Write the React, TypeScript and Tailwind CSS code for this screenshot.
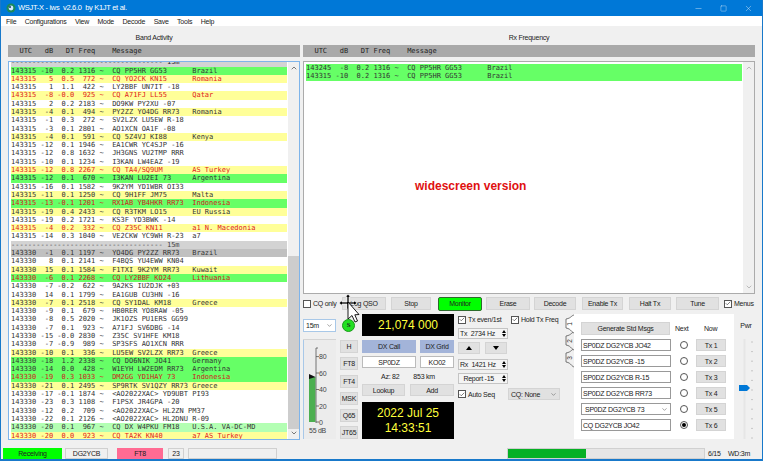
import { ChevronDown, Minus, Square, X, Check } from "lucide-react";

const mono = "font-['DejaVu_Sans_Mono',monospace]";

type Kind = "" | "g" | "y" | "yr" | "gr" | "gray" | "sep" | "lg";

const rowColor: Record<Kind, string> = {
  "": "text-[#333]",
  g: "bg-[#66ff66] text-[#333]",
  y: "bg-[#ffff99] text-[#333]",
  yr: "bg-[#ffff99] text-[#e02020]",
  gr: "bg-[#66ff66] text-[#d02020]",
  gray: "bg-[#c0c0c0] text-[#333]",
  sep: "bg-[#d3d3d3] text-[#444]",
  lg: "bg-[#b3ffb3] text-[#333]",
};

const fmt = (t: string, db: string, dt: string, f: string, msg: string, c = "") =>
  t + db.padStart(4) + dt.padStart(5) + f.padStart(5) + " ~  " + msg.padEnd(19) + c;

const sep = "------------------------------------ 15m";
const a = "143315";
const b = "143330";
const rows: [string, Kind][] = [
  [fmt(a, "-10", "0.2", "1316", "CQ PP5HR GG53", "Brazil"), "g"],
  [fmt(a, "5", "0.5", "772", "CQ YO2CK KN15", "Romania"), "yr"],
  [fmt(a, "1", "1.1", "422", "LY2BBF UN7IT -18"), ""],
  [fmt(a, "-8", "-0.0", "925", "CQ A71FJ LL55", "Qatar"), "yr"],
  [fmt(a, "2", "0.2", "2183", "DO9KW PY2XU -07"), ""],
  [fmt(a, "-4", "0.1", "494", "PY2ZZ YO4DG RR73", "Romania"), "y"],
  [fmt(a, "-1", "0.3", "272", "SV2LZX LU5EW R-18"), ""],
  [fmt(a, "-3", "0.1", "2801", "AO1XCN OA1F -08"), ""],
  [fmt(a, "-4", "0.1", "591", "CQ 5Z4VJ KI88", "Kenya"), "y"],
  [fmt(a, "-12", "0.1", "1946", "EA1CWR YC4SJP -16"), ""],
  [fmt(a, "-12", "0.8", "1632", "JH3GNS VU2TMP RRR"), ""],
  [fmt(a, "-10", "0.1", "1234", "I3KAN LW4EAZ -19"), ""],
  [fmt(a, "-12", "0.8", "2267", "CQ TA4/SQ9UM", "AS Turkey"), "yr"],
  [fmt(a, "-12", "0.1", "670", "I3KAN LU2EI 73", "Argentina"), "g"],
  [fmt(a, "-16", "0.1", "1582", "9K2YM YD1WBR OI33"), ""],
  [fmt(a, "-11", "0.1", "1250", "CQ 9H1FF JM75", "Malta"), "y"],
  [fmt(a, "-13", "-0.1", "1201", "RX1AB YB4HKR RR73", "Indonesia"), "gr"],
  [fmt(a, "-19", "0.4", "2433", "CQ R3TKM LO15", "EU Russia"), "y"],
  [fmt(a, "-19", "0.2", "1721", "KS3F YD3BWK -14"), ""],
  [fmt(a, "-4", "0.2", "332", "CQ Z35C KN11", "a1 N. Macedonia"), "yr"],
  [fmt(a, "-14", "0.3", "1040", "VE2CKW YC9WH R-23", "a7"), ""],
  [sep, "sep"],
  [fmt(b, "-1", "0.1", "1197", "YO4DG PY2ZZ RR73", "Brazil"), "gray"],
  [fmt(b, "8", "0.1", "2141", "F4BQS YU4EWW KN04"), ""],
  [fmt(b, "15", "0.1", "1584", "F1TXI 9K2YM RR73", "Kuwait"), "y"],
  [fmt(b, "-6", "0.1", "2268", "CQ LY2BBF KO24", "Lithuania"), "gr"],
  [fmt(b, "-7", "-0.2", "622", "9A2KS IU2DJK +03"), ""],
  [fmt(b, "14", "0.1", "1799", "EA1GUB CU3HN -16"), ""],
  [fmt(b, "-7", "0.1", "2518", "CQ SY1DAL KM18", "Greece"), "y"],
  [fmt(b, "-9", "0.1", "679", "HB0RER YO8RAW -05"), ""],
  [fmt(b, "-8", "0.5", "2020", "JK1OZS PU1ERS GG99"), ""],
  [fmt(b, "-7", "0.1", "923", "A71FJ SV6DBG -14"), ""],
  [fmt(b, "-15", "-0.0", "2830", "Z35C SV1HFE KM18"), ""],
  [fmt(b, "-7", "-0.9", "989", "SP3SFS AO1XCN RRR"), ""],
  [fmt(b, "-10", "0.1", "336", "LU5EW SV2LZX RR73", "Greece"), "y"],
  [fmt(b, "-18", "1.2", "2338", "CQ DO6NIK JO41", "Germany"), "g"],
  [fmt(b, "-14", "0.0", "428", "W1EYH LW2EDM RR73", "Argentina"), "g"],
  [fmt(b, "-19", "0.3", "1033", "DM2GG YD1HAY 73", "Indonesia"), "gr"],
  [fmt(b, "-21", "0.1", "2495", "SP9RTK SV1QZY RR73", "Greece"), "y"],
  [fmt(b, "-17", "-0.1", "1874", "<AO2022XAC> YD9UBT PI93"), ""],
  [fmt(b, "-23", "0.3", "1108", "F1PSX JR4GPA -20"), ""],
  [fmt(b, "-12", "0.2", "709", "<AO2022XAC> HL2ZN PM37"), ""],
  [fmt(b, "-22", "0.1", "2126", "<AO2022XAC> HL2DNU R-09"), ""],
  [fmt(b, "-20", "0.1", "967", "CQ DX W4PKU FM18", "U.S.A. VA-DC-MD"), "lg"],
  [fmt(b, "-20", "0.0", "923", "CQ TA2K KN40", "a7 AS Turkey"), "yr"],
];

function Row({ text, kind }: { text: string; kind: Kind }) {
  return <div className={`h-[8.3px] leading-[8.3px] whitespace-pre ${rowColor[kind]}`}>{text}</div>;
}

function Scrollbar({ thumb }: { thumb?: boolean }) {
  return (
    <div className="w-[11px] flex flex-col items-center bg-[#f0f0f0] text-[#606060]">
      <ChevronDown size={8} strokeWidth={2.5} className={`rotate-180 mt-[2px] shrink-0 ${thumb ? "" : "text-[#b0b0b0]"}`} />
      <div className="flex-1 w-full flex flex-col justify-end">
        {thumb && <div className="h-[173px] bg-[#cdcdcd]" />}
      </div>
      <ChevronDown size={8} strokeWidth={2.5} className={`mb-[2px] shrink-0 ${thumb ? "" : "text-[#b0b0b0]"}`} />
    </div>
  );
}

function HeaderBar() {
  return (
    <div className={`h-[12px] bg-[#a9a9a9] pl-[3px] text-[7px] tracking-normal leading-[12px] whitespace-pre text-[#222] ${mono}`}>
      {"  UTC   dB   DT Freq    Message"}
    </div>
  );
}

function Btn({ children, className = "" }: { children: React.ReactNode; className?: string }) {
  return (
    <div className={`bg-[#e1e1e1] border border-[#d4d4d4] flex items-center justify-center text-[#222] ${className}`}>
      {children}
    </div>
  );
}

function Box({ on }: { on?: boolean }) {
  return (
    <span className="w-[8px] h-[8px] border border-[#555] bg-white flex items-center justify-center shrink-0">
      {on && <Check size={7} strokeWidth={2.5} className="text-[#333]" />}
    </span>
  );
}

function Spin({ children, className = "" }: { children: React.ReactNode; className?: string }) {
  return (
    <div className={`w-[50px] h-[11px] bg-[#f4f4f4] border border-[#c4c4c4] flex items-center pl-[1px] ${className}`}>
      <span className="flex-1 whitespace-pre">{children}</span>
      <span className="w-[7px] h-[9px] flex flex-col items-center justify-center gap-[1px] text-[#222]">
        <span className="w-0 h-0 border-x-[2px] border-x-transparent border-b-[3px] border-b-black" />
        <span className="w-0 h-0 border-x-[2px] border-x-transparent border-t-[3px] border-t-black" />
      </span>
    </div>
  );
}

function Meter() {
  const marks = [
    [355.6, "80"],
    [372, "60"],
    [388.5, "40"],
    [405, "20"],
    [421, "0"],
  ] as const;
  return (
    <svg width="33" height="100" viewBox="303 338 33 100" className="bg-[#ececec] block">
      <line x1="303.5" y1="338" x2="303.5" y2="438" stroke="#a8c8e8" strokeWidth="1" />
      <line x1="303" y1="338.5" x2="336" y2="338.5" stroke="#d4d4d4" strokeWidth="1" />
      <rect x="309" y="376" width="6.5" height="45" fill="#4caf50" />
      <line x1="316" y1="347" x2="316" y2="422" stroke="#555" strokeWidth="0.8" />
      <line x1="316" y1="347" x2="318" y2="347" stroke="#555" strokeWidth="0.8" />
      <polygon points="309,373 315.5,376 309,378" fill="#111" />
      {marks.map(([y, t]) => (
        <g key={t}>
          <line x1="316" y1={y} x2="319" y2={y} stroke="#555" strokeWidth="0.8" />
          <text x="319" y={y + 2.6} fontSize="7" fill="#444" fontFamily="Liberation Sans">
            {t}
          </text>
        </g>
      ))}
      <text x="309" y="432" fontSize="7" fill="#444" fontFamily="Liberation Sans">
        55 dB
      </text>
    </svg>
  );
}

function Tabs() {
  return (
    <svg width="11" height="54" viewBox="0 0 11 54" className="block shrink-0">
      {[2, 1, 0].map((i) => {
        const y = i * 17;
        return (
          <g key={i}>
            <path
              d={`M11 ${y + 19} C7 ${y + 19} 8 ${y + 15} 2 ${y + 14} L2 ${y + 5} C8 ${y + 4} 7 ${y + 1} 11 ${y + 1}`}
              fill={i === 0 ? "#fff" : "#f0f0f0"}
              stroke="#555"
              strokeWidth="0.8"
            />
            <text
              x="6.5"
              y={y + 10}
              fontSize="6.5"
              fill="#333"
              fontFamily="Liberation Sans"
              textAnchor="middle"
              dominantBaseline="middle"
              transform={`rotate(-90 6.5 ${y + 10})`}
            >
              {i + 1}
            </text>
          </g>
        );
      })}
    </svg>
  );
}

function Slider() {
  const ticks = [0, 1, 2, 3, 4, 5, 6, 7, 8, 9, 10];
  return (
    <svg width="18" height="102" viewBox="737 338 18 102" className="block">
      <rect x="743.5" y="338" width="2" height="100" fill="#e6e6e6" />
      {ticks.map((i) => (
        <line key={i} x1="751" y1={341 + i * 9.6} x2="753" y2={341 + i * 9.6} stroke="#bbb" strokeWidth="0.8" />
      ))}
      <polygon points="739,384 747,384 750,387 747,390 739,390" fill="#0078d7" />
    </svg>
  );
}

function Cursor() {
  return (
    <svg width="24" height="34" viewBox="0 0 24 34" className="absolute left-[337px] top-[293px]">
      <path d="M10 1 L12.5 4 L11 4 L11 9 L16 9 L16 7.5 L19 10 L16 12.5 L16 11 L11 11 L11 16 L9 16 L9 11 L4 11 L4 12.5 L1 10 L4 7.5 L4 9 L9 9 L9 4 L7.5 4 Z" fill="#000" stroke="#fff" strokeWidth="0.7" />
      <path d="M10 9 L10 26 L14 22.5 L17 29 L19.5 28 L16.8 21.8 L21 21.5 Z" fill="#fff" stroke="#000" strokeWidth="0.9" />
    </svg>
  );
}

const txRows = [
  "SP0DZ DG2YCB JO42",
  "SP0DZ DG2YCB -15",
  "SP0DZ DG2YCB R-15",
  "SP0DZ DG2YCB RR73",
  "SP0DZ DG2YCB 73",
  "CQ DG2YCB JO42",
];

export default function App() {
  return (
    <div className="relative w-[763px] h-[461px] overflow-hidden flex flex-col bg-[#f0f0f0] border-x border-b-2 border-[#1979ca] font-['Liberation_Sans',sans-serif] text-[7px] tracking-[-0.25px] leading-none text-[#222]">
      {/* title bar */}
      <div className="h-[16px] shrink-0 bg-[#0078d7] text-white flex items-center pl-[5px] text-[7.5px] tracking-[-0.3px]">
        <svg width="10" height="10" viewBox="0 0 10 10" className="shrink-0 mr-[2px]">
          <circle cx="5" cy="5" r="4.5" fill="#1b8a5a" />
          <circle cx="5" cy="5" r="2.4" fill="#cfe8ff" />
          <circle cx="4" cy="4" r="1.1" fill="#23406e" />
        </svg>
        <span className="whitespace-pre">WSJT-X - iws  v2.6.0  by K1JT et al.</span>
        <div className="ml-auto flex items-center gap-[17px] pr-[9px]">
          <Minus size={9} strokeWidth={1} />
          <Square size={7} strokeWidth={1.2} />
          <X size={9} strokeWidth={1} />
        </div>
      </div>
      {/* menu */}
      <div className="h-[10px] shrink-0 bg-white flex items-center gap-[8.5px] pl-[5px]">
        {["File", "Configurations", "View", "Mode", "Decode", "Save", "Tools", "Help"].map((m) => (
          <span key={m}>{m}</span>
        ))}
      </div>
      {/* panes */}
      <div className="flex-1 flex pl-[7px] min-h-0">
        <div className="w-[292px] shrink-0 flex flex-col">
          <div className="h-[19px] flex items-center justify-center pt-[3px]">Band Activity</div>
          <HeaderBar />
          <div className={`mt-[4px] h-[379px] border border-[#7eb4ea] bg-white flex overflow-hidden pl-[1px] text-[7px] tracking-normal ${mono}`}>
            <div className="w-[276px] ml-[1px] shrink-0 overflow-hidden">
              <div className="h-[4.5px] overflow-hidden">
                <div className="-mt-[3.8px] h-[8.3px] leading-[8.3px] bg-[#d3d3d3] whitespace-pre">{sep}</div>
              </div>
              {rows.map(([t, k], i) => (
                <Row key={i} text={t} kind={k} />
              ))}
            </div>
            <div className="flex-1" />
            <Scrollbar thumb />
          </div>
        </div>
        <div className="w-[452px] ml-[3px] shrink-0 flex flex-col">
          <div className="h-[19px] flex items-center justify-center pt-[3px]">Rx Frequency</div>
          <HeaderBar />
          <div className={`mt-[4px] h-[233px] border border-[#ababab] bg-white flex text-[7px] tracking-normal relative ${mono}`}>
            <div className="flex-1 pl-[2px] pt-[2px]">
              <div className="w-[436px]">
                <Row text={fmt("143245", "-8", "0.2", "1316", "CQ PP5HR GG53", "Brazil")} kind="g" />
                <Row text={fmt("143315", "-10", "0.2", "1316", "CQ PP5HR GG53", "Brazil")} kind="g" />
              </div>
            </div>
            <Scrollbar />
            <span className="absolute left-[111px] top-[118px] text-[12px] font-bold text-[#e01010] font-['Liberation_Sans',sans-serif]">
              widescreen version
            </span>
          </div>
          {/* button row */}
          <div className="mt-[3px] h-[13px] flex items-center">
            <div className="w-[39px] flex items-center gap-[2px]">
              <Box />
              <span>CQ only</span>
            </div>
            <Btn className="w-[44px] h-full">Log QSO</Btn>
            <Btn className="w-[40px] h-full ml-[5px]">Stop</Btn>
            <div className="w-[44px] h-[14px] ml-[7px] bg-[#00ff00] border border-[#2b6b2b] rounded-[2px] flex items-center justify-center">Monitor</div>
            <Btn className="w-[44px] h-full ml-[4px]">Erase</Btn>
            <Btn className="w-[42px] h-full ml-[4px]">Decode</Btn>
            <Btn className="w-[41px] h-full ml-[6px]">Enable Tx</Btn>
            <Btn className="w-[42px] h-full ml-[6px]">Halt Tx</Btn>
            <Btn className="w-[43px] h-full ml-[5px]">Tune</Btn>
            <div className="ml-[5px] flex items-center gap-[2px]">
              <Box on />
              <span>Menus</span>
            </div>
          </div>
          {/* controls */}
          <div className="mt-[4px] flex h-[127px]">
            <div className="w-[55px] shrink-0 flex flex-col">
              <div className="flex items-center mt-[4px] h-[14px]">
                <div className="w-[33px] h-[13px] border border-[#a8c8e8] bg-white flex items-center justify-between px-[2px]">
                  <span>15m</span>
                  <ChevronDown size={7} className="text-[#666]" />
                </div>
                <div className="w-[13px] h-[13px] ml-[6px] rounded-full bg-[#22e022] border border-[#1a9a1a] flex items-center justify-center font-bold text-[7px] font-['Liberation_Serif',serif]">S</div>
              </div>
              <div className="flex mt-[7px]">
                <Meter />
                <div className="ml-[4px] w-[18px] flex flex-col gap-[4.3px] pt-[1px]">
                  {["H", "FT8", "FT4", "MSK", "Q65", "JT65"].map((m) => (
                    <Btn key={m} className="h-[13px] w-full">{m}</Btn>
                  ))}
                </div>
              </div>
            </div>
            <div className="w-[92px] ml-[4px] shrink-0 flex flex-col">
              <div className="h-[22px] bg-black text-[#ffff3c] text-[12px] tracking-normal flex items-center justify-center">21,074 000</div>
              <div className="flex gap-[4px] mt-[4px]">
                <div className="w-[54px] h-[13px] bg-[#a3b4d9] flex items-center justify-center">DX Call</div>
                <div className="flex-1 h-[13px] bg-[#a3b4d9] flex items-center justify-center">DX Grid</div>
              </div>
              <div className="flex gap-[4px] mt-[3px]">
                <div className="w-[54px] h-[12px] bg-white border border-[#bbb] flex items-center justify-center">SP0DZ</div>
                <div className="flex-1 h-[12px] bg-white border border-[#bbb] flex items-center justify-center">KO02</div>
              </div>
              <div className="h-[16px] flex items-center pl-[19px] gap-[14px]">
                <span>Az: 82</span>
                <span>853 km</span>
              </div>
              <div className="flex gap-[5px]">
                <Btn className="w-[43px] h-[12px]">Lookup</Btn>
                <Btn className="flex-1 h-[12px]">Add</Btn>
              </div>
              <div className="mt-[6px] h-[37px] bg-black text-[#ffff3c] text-[12px] tracking-normal leading-[15px] flex flex-col items-center justify-center">
                <span>2022 Jul 25</span>
                <span>14:33:51</span>
              </div>
            </div>
            <div className="w-[102px] ml-[4px] shrink-0 flex flex-col">
              <div className="h-[11px] flex items-center">
                <div className="w-[53px] flex items-center gap-[2px]">
                  <Box on />
                  <span>Tx even/1st</span>
                </div>
                <div className="flex items-center gap-[2px] whitespace-nowrap">
                  <Box on />
                  <span>Hold Tx Freq</span>
                </div>
              </div>
              <Spin className="mt-[3px]">Tx  2734 Hz</Spin>
              <div className="flex gap-[5px] mt-[3px]">
                <Btn className="w-[22px] h-[12px]"><span className="w-0 h-0 border-x-[3px] border-x-transparent border-b-[4px] border-b-black" /></Btn>
                <Btn className="w-[22px] h-[12px]"><span className="w-0 h-0 border-x-[3px] border-x-transparent border-t-[4px] border-t-black" /></Btn>
              </div>
              <Spin className="mt-[5px]">Rx  1421 Hz</Spin>
              <Spin className="mt-[3px]">{"  Report -15"}</Spin>
              <div className="flex items-center mt-[4px] h-[12px]">
                <div className="w-[50px] flex items-center gap-[2px]">
                  <Box on />
                  <span>Auto Seq</span>
                </div>
                <div className="w-[52px] h-[12px] bg-[#e1e1e1] border border-[#d4d4d4] flex items-center justify-between px-[2px]">
                  <span>CQ: None</span>
                  <ChevronDown size={7} className="text-[#666]" />
                </div>
              </div>
            </div>
            <div className="ml-[4px] shrink-0 flex">
              <Tabs />
              <div className="w-[160px] h-[125px] -ml-[1px] bg-white px-[7px] pt-[8px]">
                <div className="flex items-center h-[13px]">
                  <Btn className="w-[89px] h-full">Generate Std Msgs</Btn>
                  <span className="ml-[5px] w-[15px]">Next</span>
                  <span className="ml-[14px]">Now</span>
                </div>
                <div className="flex flex-col gap-[4px] mt-[4px]">
                  {txRows.map((t, i) => (
                    <div key={t} className="flex items-center h-[12px]">
                      <div className="w-[90px] h-full border border-[#999] bg-white flex items-center justify-between pl-[1px] pr-[2px] whitespace-nowrap">
                        <span className={i === 4 ? "pl-[2px]" : ""}>{t}</span>
                        {i === 4 && <ChevronDown size={7} className="text-[#666]" />}
                      </div>
                      <span className="ml-[9px] w-[8px] h-[8px] rounded-full border border-[#555] flex items-center justify-center shrink-0">
                        {i === 5 && <span className="w-[4px] h-[4px] rounded-full bg-black" />}
                      </span>
                      <Btn className="ml-[8px] w-[30px] h-full">{`Tx ${i + 1}`}</Btn>
                    </div>
                  ))}
                </div>
              </div>
            </div>
            <div className="ml-[3px] w-[18px] shrink-0 flex flex-col items-center">
              <div className="h-[25px] pt-[8px]">Pwr</div>
              <Slider />
            </div>
          </div>
        </div>
      </div>
      {/* status bar */}
      <div className="h-[17px] shrink-0 flex items-center pl-[2px] pt-[5px]">
        <div className="w-[59px] h-[11px] bg-[#00ff00] flex items-center justify-center">Receiving</div>
        <div className="w-[43px] h-[11px] ml-[3px] border border-[#d0d0d0] flex items-center justify-center">DG2YCB</div>
        <div className="w-[46px] h-[11px] ml-[9px] bg-[#ff6b93] flex items-center justify-center">FT8</div>
        <div className="w-[16px] h-[11px] ml-[5px] border border-[#d0d0d0] flex items-center justify-center">23</div>
        <div className="w-[89px] h-[11px] ml-[4px] border border-[#d0d0d0]" />
        <div className="w-[198px] h-[11px] ml-[230px] bg-[#e6e6e6] border border-[#d0d0d0] flex overflow-hidden">
          <div className="w-[78px] bg-[#06b025]" />
        </div>
        <div className="ml-[3px] w-[18px]">6/15</div>
        <div className="ml-[2px]">WD:3m</div>
      </div>
      <Cursor />
    </div>
  );
}
